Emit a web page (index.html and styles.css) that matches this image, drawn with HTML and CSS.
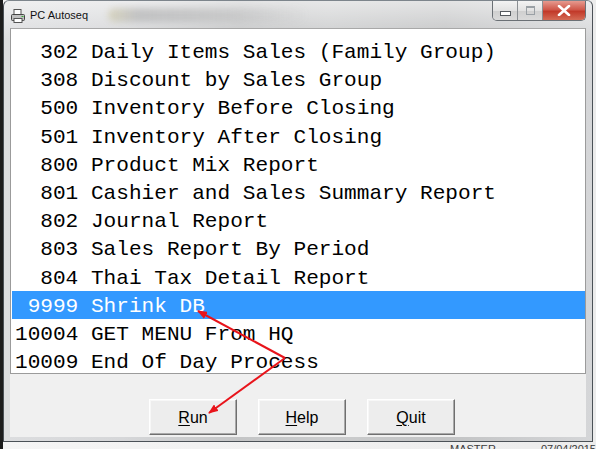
FILE: index.html
```html
<!DOCTYPE html>
<html>
<head>
<meta charset="utf-8">
<title>PC Autoseq</title>
<link rel="stylesheet" href="styles.css">
</head>
<body>
<div class="screen">
  <div class="desktop">
    <div class="window">
      <div class="titlebar">
        <svg class="appicon" width="16" height="16" viewBox="0 0 16 16">
          <rect x="4" y="1.5" width="7" height="5" fill="#fff" stroke="#555"/>
          <rect x="1.5" y="6.5" width="13" height="6" rx="1" fill="#bfbfbf" stroke="#444"/>
          <rect x="4" y="10.5" width="8" height="4" fill="#fff" stroke="#555"/>
          <rect x="11.5" y="8" width="2" height="1" fill="#3a3"/>
        </svg>
        <span class="title">PC Autoseq</span>
        <span class="blur"></span>
        <div class="controls">
          <span class="ctl min"><span class="min-bar"></span></span>
          <span class="ctl max"><span class="max-box"></span></span>
          <span class="ctl close">
            <svg width="14" height="11" viewBox="0 0 14 11"><path d="M2 1 L12 10 M12 1 L2 10" stroke="#fff" stroke-width="2.6" stroke-linecap="round"/></svg>
          </span>
        </div>
      </div>
      <div class="client">
        <div class="listbox">
          <div class="row"><span class="num">302</span> Daily Items Sales (Family Group)</div>
          <div class="row"><span class="num">308</span> Discount by Sales Group</div>
          <div class="row"><span class="num">500</span> Inventory Before Closing</div>
          <div class="row"><span class="num">501</span> Inventory After Closing</div>
          <div class="row"><span class="num">800</span> Product Mix Report</div>
          <div class="row"><span class="num">801</span> Cashier and Sales Summary Report</div>
          <div class="row"><span class="num">802</span> Journal Report</div>
          <div class="row"><span class="num">803</span> Sales Report By Period</div>
          <div class="row"><span class="num">804</span> Thai Tax Detail Report</div>
          <div class="row selected"><span class="num">9999</span> Shrink DB</div>
          <div class="row"><span class="num">10004</span> GET MENU From HQ</div>
          <div class="row"><span class="num">10009</span> End Of Day Process</div>
        </div>
        <div class="buttons">
          <button class="btn"><u>R</u>un</button>
          <button class="btn"><u>H</u>elp</button>
          <button class="btn"><u>Q</u>uit</button>
        </div>
      </div>
    </div>
    <div class="strip">
      <span class="strip-a">MASTER DISK</span>
      <span class="strip-b">07/04/2015</span>
    </div>
  </div>
  <svg class="arrows" width="596" height="449" viewBox="0 0 596 449">
    <defs>
      <marker id="head" markerWidth="10" markerHeight="8" refX="9" refY="4" orient="auto" markerUnits="userSpaceOnUse">
        <path d="M0 0 L10 4 L0 8 Z" fill="#e8141b"/>
      </marker>
    </defs>
    <path d="M285 358 L198 311" stroke="#e8141b" stroke-width="2" fill="none" marker-end="url(#head)"/>
    <path d="M285 358 L209 413" stroke="#e8141b" stroke-width="2" fill="none" marker-end="url(#head)"/>
  </svg>
</div>
</body>
</html>
```

FILE: styles.css
```css
html, body {
  margin: 0;
  padding: 0;
  width: 596px;
  height: 449px;
  overflow: hidden;
}

body {
  background: #f3f3f3;
  font-family: "Liberation Sans", Arial, sans-serif;
}

.screen {
  position: relative;
  width: 596px;
  height: 449px;
}

.desktop {
  width: 596px;
  height: 449px;
  box-sizing: border-box;
  border-left: 3px solid #1c1c1c;
  background: linear-gradient(to right, #f5f5f5, #ececec);
  display: flex;
  flex-direction: column;
}

.window {
  width: 590px;
  height: 442px;
  box-sizing: border-box;
  border: 1px solid #4b5157;
  border-top-color: #7d858c;
  border-radius: 6px 6px 0 0;
  padding: 0 6px 4px 6px;
  background:
    linear-gradient(to bottom, rgba(255,255,255,0.55), rgba(255,255,255,0) 40px),
    linear-gradient(to right, #dcdddf 0%, #d6d7d9 20%, #c4c5c6 40%, #cbcccd 55%, #c2c3c4 75%, #d5d6d8 100%);
  display: flex;
  flex-direction: column;
}

.titlebar {
  height: 27px;
  display: flex;
  align-items: flex-start;
  flex-shrink: 0;
}

.appicon {
  margin: 7px 0 0 0;
  flex-shrink: 0;
}

.title {
  margin: 7px 0 0 4px;
  font-size: 11px;
  line-height: 14px;
  color: #111;
  font-family: "Liberation Sans", Arial, sans-serif;
}

.blur {
  width: 200px;
  height: 14px;
  margin: 7px 0 0 20px;
  border-radius: 7px;
  background: linear-gradient(to right, rgba(190,180,120,0.35), rgba(120,120,120,0.3) 15%, rgba(140,140,140,0.22) 60%, rgba(150,150,150,0));
  filter: blur(3px);
}

.controls {
  margin-left: auto;
  display: flex;
  height: 19px;
  border: 1px solid #6b7075;
  border-top: none;
  border-radius: 0 0 5px 5px;
  overflow: hidden;
}

.ctl {
  display: flex;
  align-items: center;
  justify-content: center;
  height: 19px;
  box-sizing: border-box;
}

.min, .max {
  width: 25px;
  background: linear-gradient(to bottom, #f3f3f3 0%, #e2e2e2 50%, #cfcfcf 51%, #dadada 100%);
  border-right: 1px solid #8b8f93;
}

.min-bar {
  width: 9px;
  height: 3px;
  margin-top: 5px;
  background: #fff;
  border: 1px solid #555a5f;
}

.max-box {
  width: 7px;
  height: 6px;
  border: 1px solid #9aa0a5;
  border-top-width: 2px;
  background: transparent;
}

.close {
  width: 42px;
  background: linear-gradient(to bottom, #e69a8f 0%, #d0584a 45%, #c23a2a 55%, #d46b55 100%);
}

.client {
  flex: 1;
  display: flex;
  flex-direction: column;
  background: #f0f0f0;
}

.listbox {
  height: 346px;
  box-sizing: border-box;
  border: 1px solid #9b9b9b;
  border-top-color: #a8a8a8;
  padding: 8px 0 0 1px;
  background: #fff;
  overflow: hidden;
  flex-shrink: 0;
}

.row {
  height: 28.2px;
  box-sizing: border-box;
  padding: 3px 0 0 3px;
  line-height: 25.2px;
  font-family: "Liberation Mono", "Courier New", monospace;
  font-size: 21.1px;
  color: #000;
  white-space: pre;
}

.row.selected {
  background: #3399ff;
  color: #fff;
}

.num {
  display: inline-block;
  width: 5ch;
  text-align: right;
}

.buttons {
  flex: 1;
  display: flex;
  justify-content: center;
  align-items: flex-start;
  gap: 21px;
  padding: 25px 0 0 8px;
}

.btn {
  width: 88px;
  height: 36px;
  box-sizing: border-box;
  margin: 0;
  padding: 2px 0 0 0;
  font-family: "Liberation Sans", Arial, sans-serif;
  font-size: 16px;
  color: #000;
  background: #ededed;
  border: 1px solid;
  border-color: #ffffff #6f6f6f #6f6f6f #ffffff;
  box-shadow: inset -1px -1px 0 #a9a9a9, inset 1px 1px 0 #f7f7f7;
}

.btn u {
  text-decoration-thickness: 1px;
  text-underline-offset: 2px;
}

.strip {
  height: 7px;
  overflow: hidden;
  display: flex;
  font-size: 11px;
  line-height: 14px;
  color: #3a3a3a;
  font-family: "Liberation Sans", Arial, sans-serif;
}

.strip-a {
  margin-left: 447px;
}

.strip-b {
  margin-left: 30px;
}

.arrows {
  position: absolute;
  top: 0;
  left: 0;
  pointer-events: none;
}
```
